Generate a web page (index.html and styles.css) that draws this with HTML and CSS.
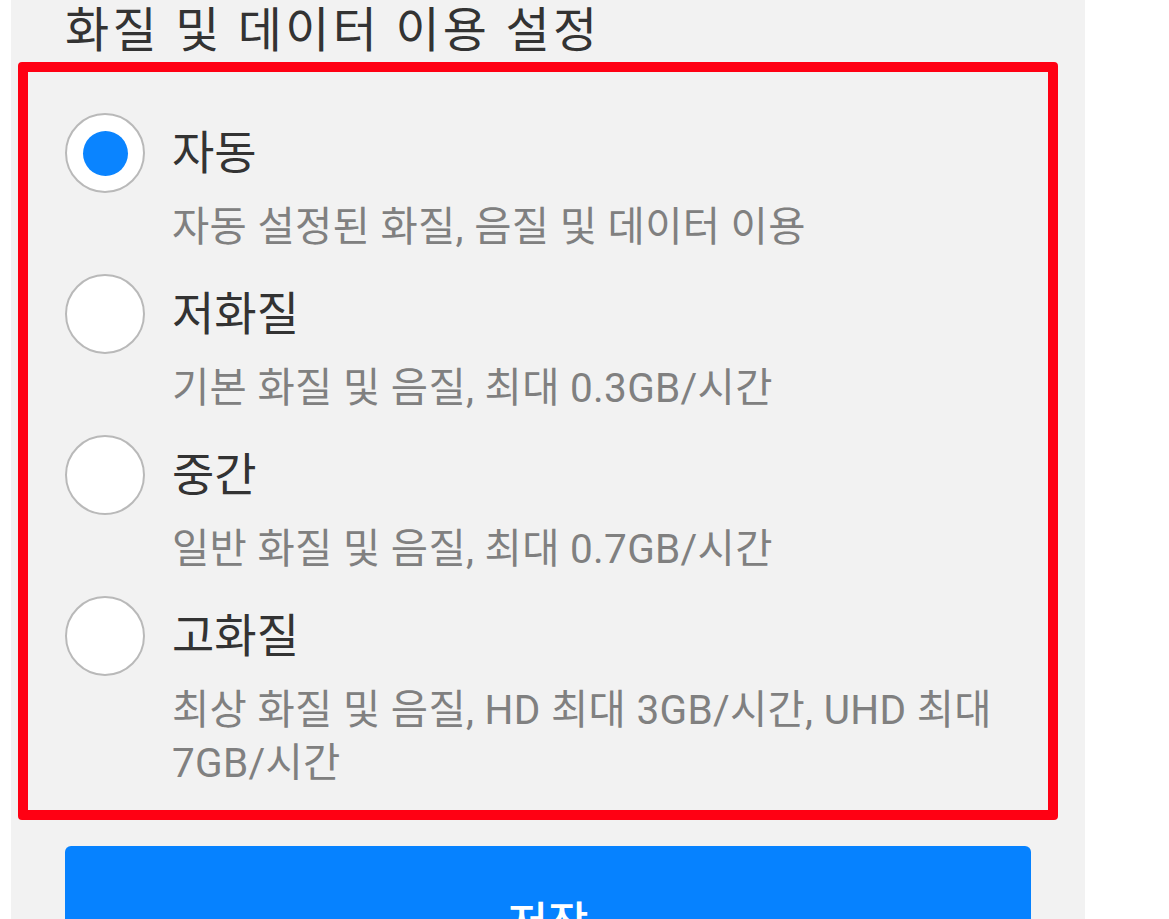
FILE: index.html
```html
<!DOCTYPE html>
<html lang="ko">
<head>
  <meta charset="UTF-8" />
  <title>화질 및 데이터 이용 설정</title>
  <link rel="stylesheet" href="styles.css">
</head>
<body>
  <div class="panel">
    <h1 class="panel-title">화질 및 데이터 이용 설정</h1>

    <!-- Quality options -->
    <div class="option-box">
      <div class="option">
        <span class="radio checked"></span>
        <div class="option-text">
          <div class="option-label">자동</div>
          <div class="option-desc">자동 설정된 화질, 음질 및 데이터 이용</div>
        </div>
      </div>
      <div class="option">
        <span class="radio"></span>
        <div class="option-text">
          <div class="option-label">저화질</div>
          <div class="option-desc">기본 화질 및 음질, 최대 0.3GB/시간</div>
        </div>
      </div>
      <div class="option">
        <span class="radio"></span>
        <div class="option-text">
          <div class="option-label">중간</div>
          <div class="option-desc">일반 화질 및 음질, 최대 0.7GB/시간</div>
        </div>
      </div>
      <div class="option">
        <span class="radio"></span>
        <div class="option-text">
          <div class="option-label">고화질</div>
          <div class="option-desc">최상 화질 및 음질, HD 최대 3GB/시간, UHD 최대 7GB/시간</div>
        </div>
      </div>
    </div>

    <button class="save-btn">저장</button>
  </div>
</body>
</html>
```

FILE: styles.css
```css
* {
  margin: 0;
  padding: 0;
  box-sizing: border-box;
}
body {
  background-color: #ffffff;
  font-family: Roboto, "Noto Sans CJK KR", sans-serif;
  overflow: hidden;
}
.panel {
  width: 1074px;
  min-height: 919px;
  margin-left: 11px;
  padding: 0 54px;
  background-color: #f2f2f2;
}
.panel-title {
  font-size: 48px;
  font-weight: 400;
  letter-spacing: 3.3px;
  line-height: 62px;
  color: #333333;
}
/* Options box */
.option-box {
  margin: 0 -27px 0 -47px;
  padding: 41px 20px 20px 37px;
  border: 10px solid #ff0013;
  border-radius: 4px;
  display: flex;
  flex-direction: column;
  gap: 20px;
}
.option {
  display: flex;
  gap: 27px;
}
.radio {
  flex: none;
  width: 80px;
  height: 80px;
  border: 2.5px solid #b9b9b9;
  border-radius: 50%;
  background-color: #ffffff;
  display: flex;
  align-items: center;
  justify-content: center;
}
.radio.checked::after {
  content: "";
  width: 45px;
  height: 45px;
  border-radius: 50%;
  background-color: #0a84ff;
}
.option-label {
  font-size: 46px;
  line-height: 80px;
  color: #333333;
}
.option-desc {
  margin-top: 8px;
  font-size: 40.5px;
  letter-spacing: 0.3px;
  line-height: 53px;
  color: #808080;
}
/* Save button */
.save-btn {
  display: block;
  width: 100%;
  margin-top: 26px;
  padding: 48px 0 40px;
  border: none;
  border-radius: 6px;
  background-color: #0682ff;
  color: #ffffff;
  font-family: Roboto, "Noto Sans CJK KR", sans-serif;
  font-size: 44px;
  font-weight: 500;
  line-height: 60px;
}
```
